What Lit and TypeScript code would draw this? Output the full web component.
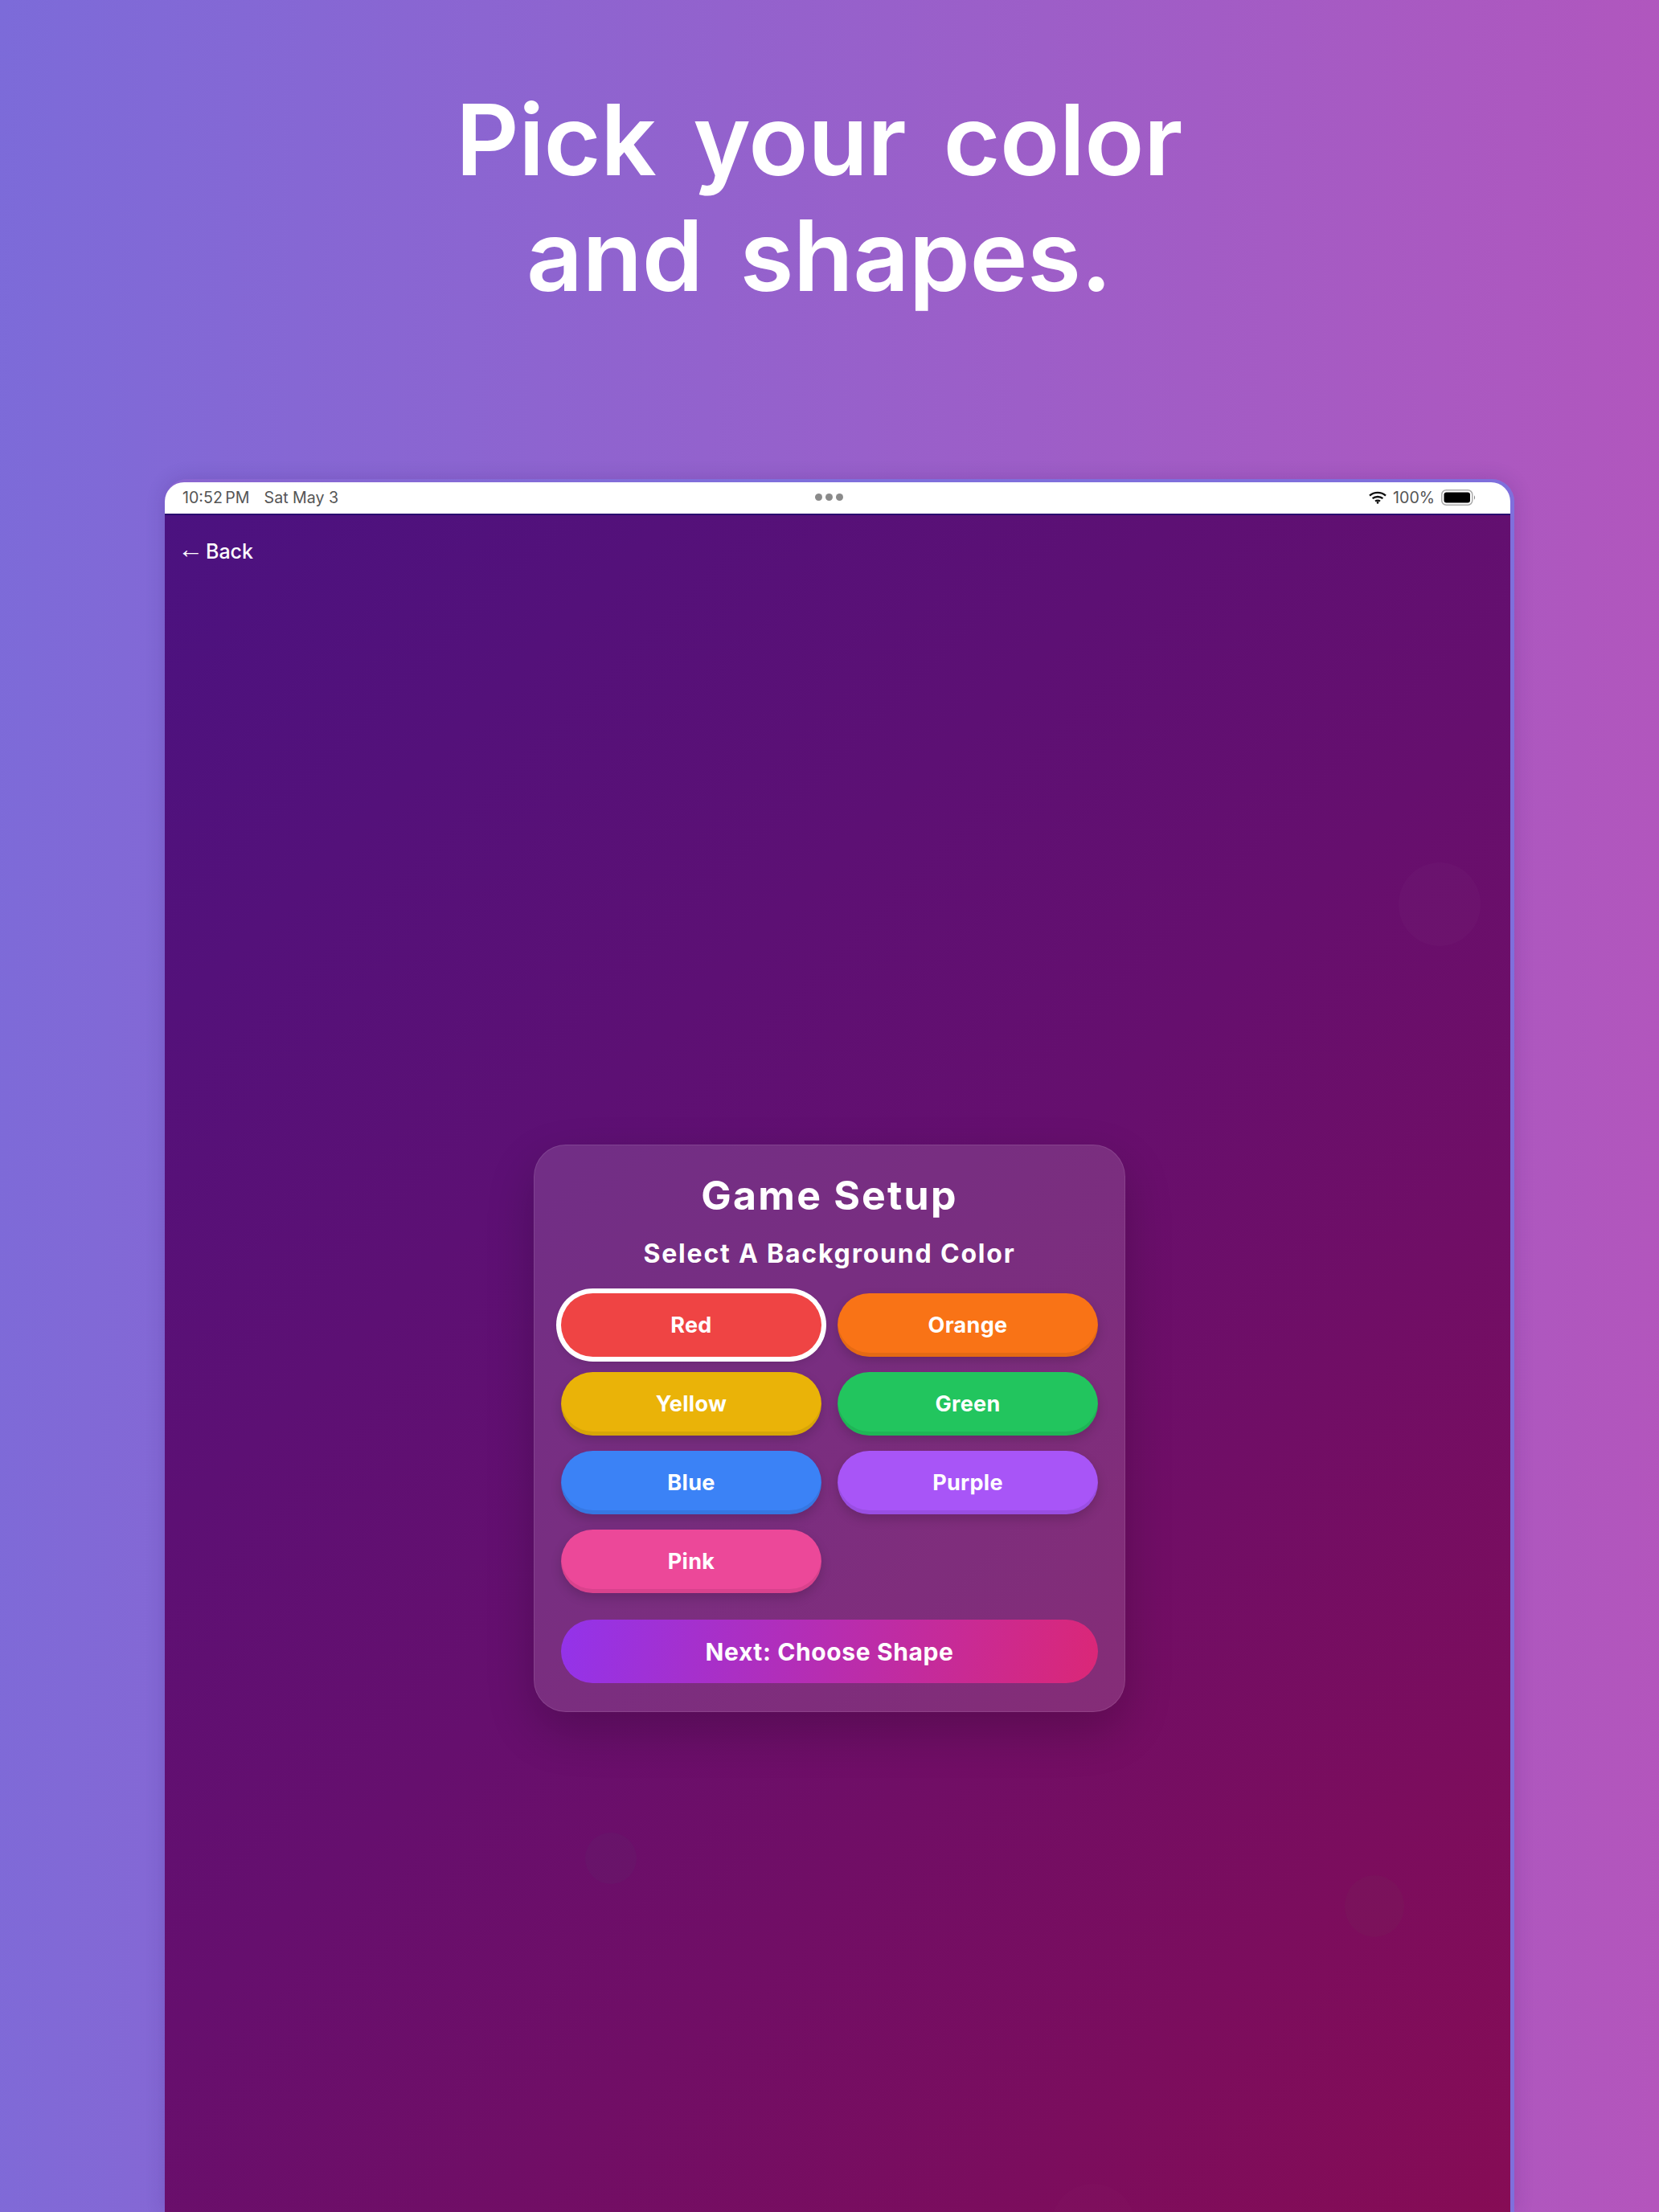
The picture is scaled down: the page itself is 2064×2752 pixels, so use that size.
import { LitElement, html, css } from "lit";
import { customElement } from "lit/decorators.js";

const COLORS = [
  ["Red", "red"], ["Orange", "orange"], ["Yellow", "yellow"], ["Green", "green"],
  ["Blue", "blue"], ["Purple", "purple"], ["Pink", "pink"],
];

@customElement("app-root")
export class AppRoot extends LitElement {
  static styles = css`
    :host { display: block; width: 2064px; height: 2752px; overflow: hidden; position: relative;
      background: linear-gradient(93deg, #7c6bd9 0%, #b455bc 100%);
      font-family: Inter, "Liberation Sans", sans-serif; color: #fff; }
    * { box-sizing: border-box; }
    h1 { margin: 0; padding: 102px 26px 0 0; height: 596px; text-align: center; font-size: 122px; line-height: 144px;
      font-weight: 580; letter-spacing: -.5px; word-spacing: 16px; }
    .device { margin-left: 205px; width: 1679px; height: 2156px; padding: 4px 5px 0 0;
      background: linear-gradient(90deg, #8a65d0, #7f6fdc 45%);
      border-radius: 28px 28px 0 0; box-shadow: 0 0 24px rgba(40,10,90,.16); }
    .status { height: 41px; background: #fff; border-radius: 24px 24px 0 0; border-bottom: 2px solid #2a0a70;
      display: grid; grid-template-columns: 1fr auto 1fr; align-items: center; padding: 0 43px 2px 22px;
      color: #555; font-size: 19.6px; }
    .time { display: flex; gap: 18px; }
    .clock { word-spacing: -2px; }
    .dots { display: flex; gap: 4px; }
    .dots i { width: 9px; height: 9px; border-radius: 50%; background: #8a8a8a; }
    .right { display: flex; justify-content: flex-end; align-items: center; gap: 8px; }
    .right svg { display: block; }
    .screen { position: relative; height: 2111px; overflow: hidden;
      background: linear-gradient(135deg, #4b1280 0%, #660f6e 50%, #860c55 100%); padding-top: 30px; }
    .back { display: flex; align-items: center; gap: 3px; margin-left: 16px; font-size: 25px; font-weight: 500; line-height: 30px; }
    .arrow { font-family: "Liberation Sans", sans-serif; font-weight: 400; font-size: 32px; line-height: 30px; margin-top: -7px; }
    .bubble { position: absolute; border-radius: 50%; }
    .b1 { left: 1535px; top: 432px; width: 102px; height: 104px; background: rgba(255,255,255,.018); }
    .b2 { left: 523px; top: 1639px; width: 64px; height: 64px; background: rgba(70,100,120,.06); }
    .b3 { left: 1468px; top: 1692px; width: 74px; height: 77px; background: rgba(90,110,80,.05); }
    .b4 { left: 1103px; top: 2076px; width: 104px; height: 104px; background: rgba(255,255,255,.012); }
    .card { position: relative; margin: 723px 0 0 459px; width: 736px; height: 706px; padding: 33px 33px 0;
      border-radius: 40px; background: rgba(255,255,255,.13); border: 1.5px solid rgba(255,255,255,.1);
      box-shadow: 0 24px 60px rgba(0,0,0,.2); }
    h2 { margin: 0; text-align: center; font-size: 50px; line-height: 58px; font-weight: 700; letter-spacing: 2.2px; }
    h3 { margin: 24px 0 29px; text-align: center; font-size: 32px; line-height: 40px; font-weight: 700; letter-spacing: 1.8px; }
    .grid { display: grid; grid-template-columns: 1fr 1fr; column-gap: 20px; row-gap: 19px; }
    .pill { height: 79px; border-radius: 40px; display: flex; align-items: center; justify-content: center;
      font-size: 27px; font-weight: 700; letter-spacing: .3px;
      box-shadow: inset 0 -5px 0 rgba(0,0,0,.08), 0 6px 14px rgba(0,0,0,.16); }
    .sel { box-shadow: 0 0 0 6px #fff, 0 6px 14px rgba(0,0,0,.16); }
    .red { background: #ef4444; } .orange { background: #f97316; } .yellow { background: #eab308; }
    .green { background: #22c55e; } .blue { background: #3b82f6; } .purple { background: #a855f7; }
    .pink { background: #ec4899; }
    .next { margin-top: 33px; font-size: 30px; letter-spacing: .6px; box-shadow: none;
      background: linear-gradient(100deg, #9333ea, #db2777); }
  `;

  render() {
    return html`
      <h1>Pick your color<br />and shapes.</h1>
      <div class="device">
        <div class="status">
          <div class="time"><span class="clock">10:52 PM</span><span>Sat May 3</span></div>
          <div class="dots"><i></i><i></i><i></i></div>
          <div class="right">
            <svg width="22" height="16" viewBox="0 0 22 16" fill="none" stroke="#111" stroke-width="2.4">
              <path d="M1 5.6 C6.6 .6 15.4 .6 21 5.6" />
              <path d="M4.6 9.2 C8 6.2 14 6.2 17.4 9.2" />
              <path d="M8 12.6 C9.6 11.4 12.4 11.4 14 12.6" />
              <circle cx="11" cy="14.4" r="1.3" fill="#111" stroke="none" />
            </svg>
            <span>100%</span>
            <svg width="43" height="20" viewBox="0 0 43 20">
              <rect x=".75" y=".75" width="38" height="18.5" rx="5.5" fill="#fff" stroke="#aaa" stroke-width="1.5" />
              <rect x="3.5" y="3.5" width="32.5" height="13" rx="3" fill="#000" />
              <path d="M41 7.5 C42.4 8 42.4 12 41 12.5 Z" fill="#888" />
            </svg>
          </div>
        </div>
        <div class="screen">
          <div class="bubble b1"></div>
          <div class="bubble b2"></div>
          <div class="bubble b3"></div>
          <div class="bubble b4"></div>
          <div class="back"><span class="arrow">←</span><span>Back</span></div>
          <div class="card">
            <h2>Game Setup</h2>
            <h3>Select A Background Color</h3>
            <div class="grid">
              ${COLORS.map(([n, c]) => html`<div class="pill ${c} ${c === "red" ? "sel" : ""}">${n}</div>`)}
            </div>
            <div class="pill next">Next: Choose Shape</div>
          </div>
        </div>
      </div>
    `;
  }
}
